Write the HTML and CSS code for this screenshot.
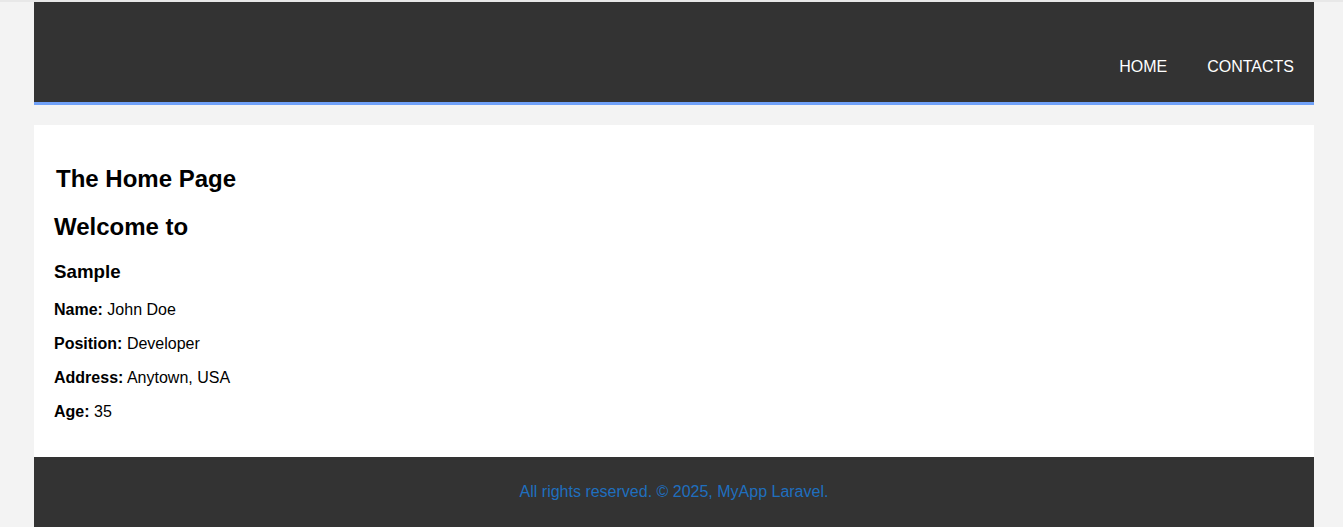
FILE: index.html
```html
<!DOCTYPE html>
<html lang="en">
<head>
<meta charset="utf-8">
<title>MyApp Laravel</title>
<link rel="stylesheet" href="styles.css">
</head>
<body>
<div class="page">
  <header class="site-header">
    <nav class="nav">
      <a href="#" class="nav-link">HOME</a>
      <a href="#" class="nav-link">CONTACTS</a>
    </nav>
  </header>
  <main class="content">
    <h2 class="page-title">The Home Page</h2>
    <h2 class="welcome">Welcome to</h2>
    <h3 class="sample">Sample</h3>
    <p class="field"><strong>Name:</strong> John Doe</p>
    <p class="field"><strong>Position:</strong> Developer</p>
    <p class="field"><strong>Address:</strong> Anytown, USA</p>
    <p class="field"><strong>Age:</strong> 35</p>
  </main>
  <footer class="site-footer">
    <p class="copy">All rights reserved. © 2025, MyApp Laravel.</p>
  </footer>
</div>
</body>
</html>
```

FILE: styles.css
```css
html, body {
  margin: 0;
  padding: 0;
}
body {
  background: #f3f3f3;
  font-family: "Liberation Sans", Arial, sans-serif;
  color: #000;
  border-top: 2px solid #e8e8e8;
}
.page {
  width: 1280px;
  margin-left: 34px;
}
.site-header {
  background: #333333;
  height: 100px;
  border-bottom: 3px solid #70a1f8;
  display: flex;
  justify-content: flex-end;
  align-items: flex-end;
  box-sizing: content-box;
}
.nav {
  display: flex;
  gap: 0;
  padding-bottom: 26px;
}
.nav-link {
  color: #ffffff;
  text-decoration: none;
  font-size: 16px;
  padding: 0 20px;
}
.content {
  background: #ffffff;
  margin-top: 20px;
  padding: 20px;
}
.page-title {
  font-size: 24px;
  margin: 20px 0 0;
  padding-left: 2px;
}
.welcome {
  font-size: 24px;
  margin: 20px 0 0;
}
.sample {
  font-size: 18.72px;
  margin: 20px 0 0;
}
.field {
  font-size: 16px;
  margin: 18px 0 16px;
}
.field + .field {
  margin-top: 16px;
}
.site-footer {
  background: #333333;
  text-align: center;
  padding: 26px 0 40px;
}
.copy {
  margin: 0;
  font-size: 16px;
  color: #1f6fbf;
}
```
